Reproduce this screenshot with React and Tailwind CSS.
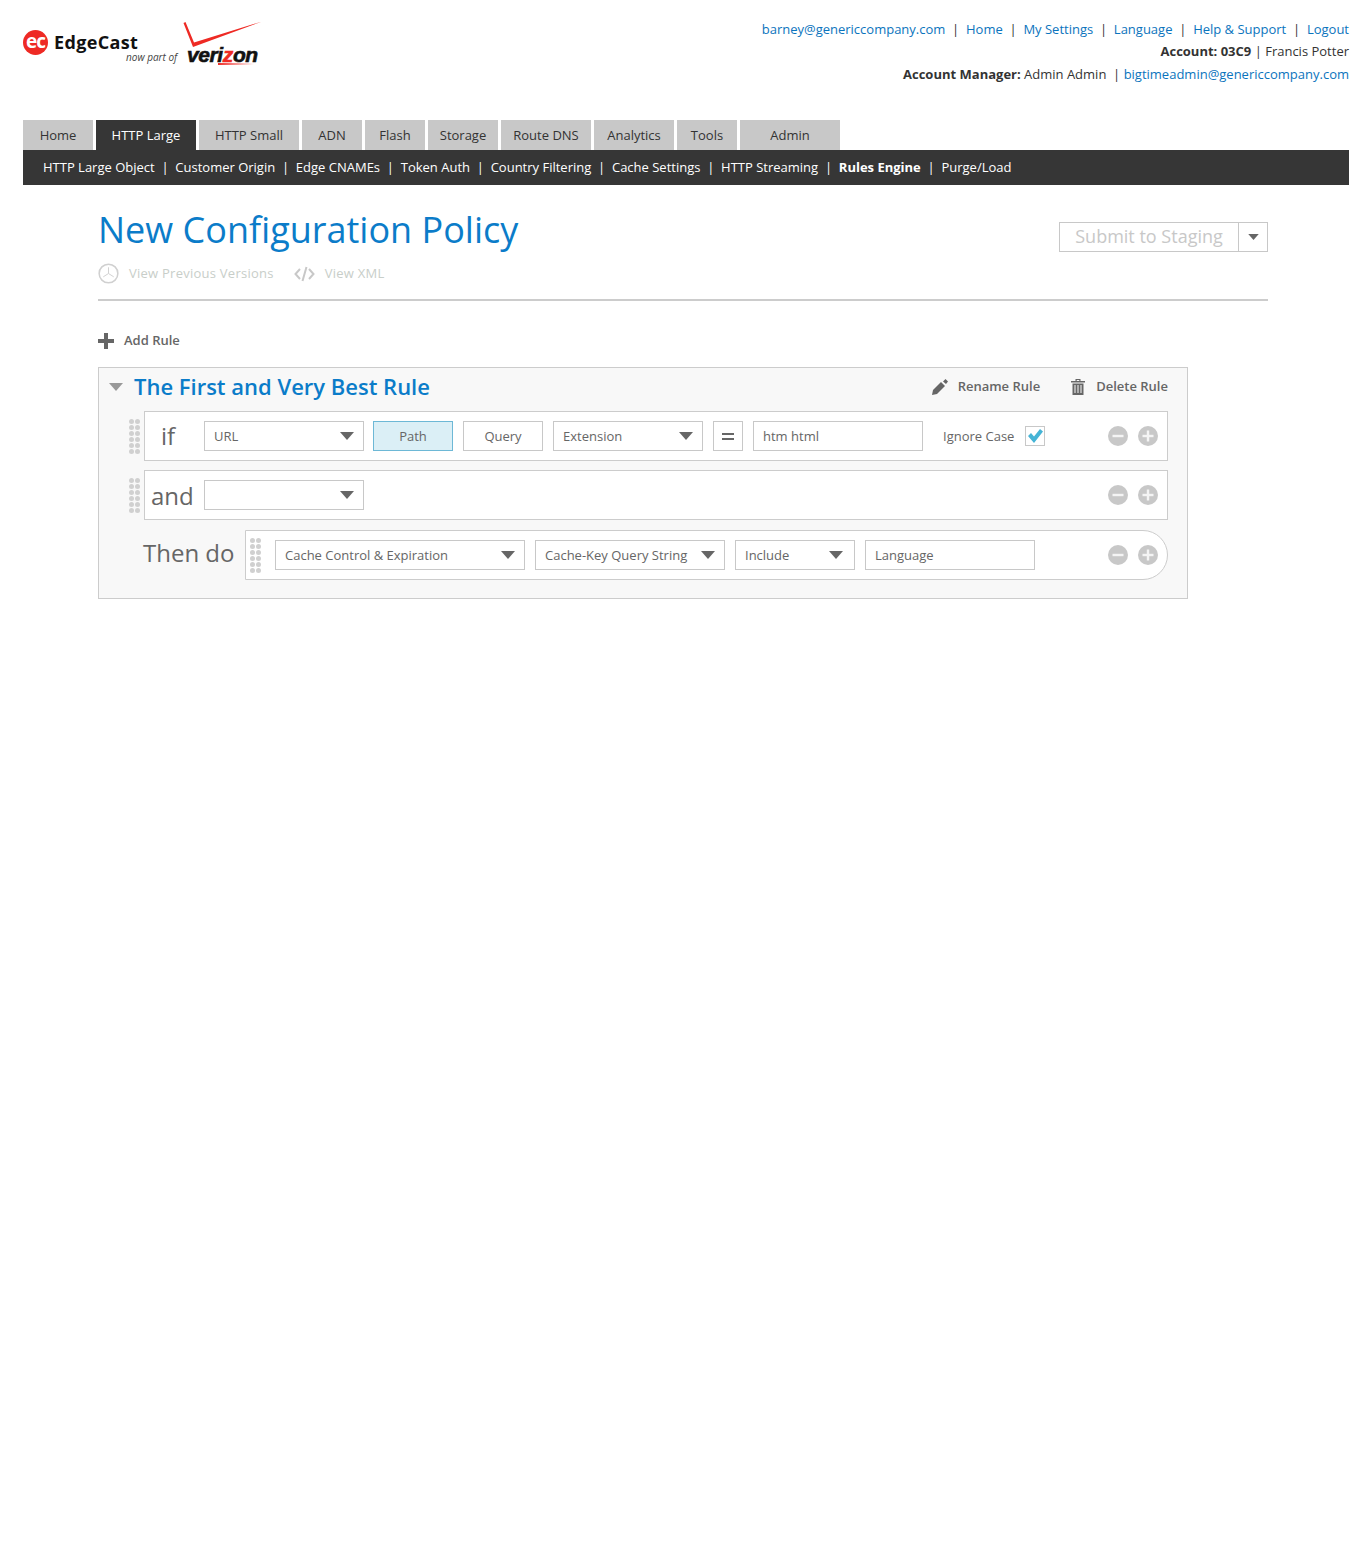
import React from 'react';

const TABS = [
  { label: 'Home', w: 'w-[70px]' },
  { label: 'HTTP Large', w: 'w-[100px]', active: true },
  { label: 'HTTP Small', w: 'w-[100px]' },
  { label: 'ADN', w: 'w-[60px]' },
  { label: 'Flash', w: 'w-[60px]' },
  { label: 'Storage', w: 'w-[70px]' },
  { label: 'Route DNS', w: 'w-[90px]' },
  { label: 'Analytics', w: 'w-[80px]' },
  { label: 'Tools', w: 'w-[60px]' },
  { label: 'Admin', w: 'w-[100px]' },
];

const SUBNAV = [
  'HTTP Large Object',
  'Customer Origin',
  'Edge CNAMEs',
  'Token Auth',
  'Country Filtering',
  'Cache Settings',
  'HTTP Streaming',
  'Rules Engine',
  'Purge/Load',
];

const Caret = ({ className = 'w-[14px] h-[8px]', fill = '#666666' }) => (
  <svg viewBox="0 0 14 8" className={className}>
    <path d="M0 0h14L7 8z" fill={fill} />
  </svg>
);

const Grip = () => (
  <div className="grid grid-cols-2 gap-x-px gap-y-px w-[11px] shrink-0">
    {Array.from({ length: 12 }).map((_, i) => (
      <span key={i} className="w-[5px] h-[5px] rounded-full bg-[#d0d0d0]" />
    ))}
  </div>
);

const Select = ({ w, label, pr = 'pr-[9px]' }) => (
  <div className={`${w} ${pr} h-[30px] shrink-0 flex items-center justify-between bg-white border border-[#c8c8c8] pl-[9px] text-[13px] text-[#666]`}>
    <span className="pt-px">{label}</span>
    <Caret />
  </div>
);

const Toggle = ({ label, active }) => (
  <div
    className={`w-[80px] h-[30px] pt-px shrink-0 flex items-center justify-center border text-[13px] text-[#666] ${
      active ? 'bg-[#dbeff6] border-[#6db8d6]' : 'bg-white border-[#c8c8c8]'
    }`}
  >
    {label}
  </div>
);

const TextBox = ({ w, label }) => (
  <div className={`${w} h-[30px] pt-px shrink-0 flex items-center bg-white border border-[#c8c8c8] pl-[9px] text-[13px] text-[#666]`}>
    {label}
  </div>
);

const RoundButton = ({ plus }) => (
  <svg viewBox="0 0 20 20" className="w-5 h-5 shrink-0">
    <circle cx="10" cy="10" r="10" fill="#c8c8c8" />
    <rect x="4.5" y="8.8" width="11" height="2.4" fill="#f4f4f4" />
    {plus && <rect x="8.8" y="4.5" width="2.4" height="11" fill="#f4f4f4" />}
  </svg>
);

const RowButtons = () => (
  <div className="ml-auto flex items-center gap-[10px] pr-[9px]">
    <RoundButton />
    <RoundButton plus />
  </div>
);

const Logo = () => (
  <div className="relative w-[240px] h-[50px]">
    <div className="absolute left-0 top-[8px] w-[25px] h-[25px] rounded-full bg-[#ee2a24] flex items-center justify-center text-white text-[19px] font-bold leading-none tracking-[-1px] pb-[3px]">
      ec
    </div>
    <div className="absolute left-[31px] top-[8px] text-[18px] leading-[25px] font-bold tracking-[0.35px] text-[#111]">EdgeCast</div>
    <div className="absolute left-[103px] top-[27px] text-[10px] leading-[16px] italic text-[#444]">now part of</div>
    <svg viewBox="0 0 80 28" className="absolute left-[160px] top-0 w-[80px] h-[28px]">
      <path d="M0.5 1 L2.5 0 L11 20.5 L79 -0.5 L10 25 Z" fill="#ee2a24" />
    </svg>
    <div className="absolute left-[164px] top-[20px] text-[21px] leading-[26px] font-bold italic tracking-[-0.4px] text-[#111] [-webkit-text-stroke:0.6px_#111] font-['Liberation_Sans',sans-serif]">
      veri<span className="text-[#ee2a24] [-webkit-text-stroke:0.6px_#ee2a24]">z</span>on
    </div>
    <div className="absolute left-[195px] top-[41px] w-[36px] h-[2px] bg-linear-to-r from-[#ee2a24] to-transparent" />
  </div>
);

const App = () => {
  return (
    <div className="w-[1366px] h-[1560px] bg-white font-['Open_Sans',sans-serif] text-[13px]">
      {/* Header */}
      <header className="h-[120px] pl-[23px] pr-[17px] flex justify-between">
        <div className="pt-[22px]">
          <Logo />
        </div>
        <div className="pt-[18px] text-right text-[#333] leading-[22px]">
          <div className="text-[#0b74bd]">
            barney@genericcompany.com<span className="text-[#333] mx-[6.75px]">|</span>Home
            <span className="text-[#333] mx-[6.75px]">|</span>My Settings
            <span className="text-[#333] mx-[6.75px]">|</span>Language
            <span className="text-[#333] mx-[6.75px]">|</span>Help &amp; Support
            <span className="text-[#333] mx-[6.75px]">|</span>Logout
          </div>
          <div>
            <b className="font-bold">Account: 03C9</b> | Francis Potter
          </div>
          <div className="mt-px">
            <b className="font-bold">Account Manager:</b> Admin Admin &nbsp;| <span className="text-[#0b74bd]">bigtimeadmin@genericcompany.com</span>
          </div>
        </div>
      </header>

      {/* Tabs */}
      <nav className="ml-[23px] w-[1326px]">
        <div className="flex gap-[3px] h-[30px]">
          {TABS.map((tab) => (
            <div
              key={tab.label}
              className={`${tab.w} pt-[2px] flex items-center justify-center ${
                tab.active ? 'bg-[#363636] text-white' : 'bg-[#c8c8c8] text-[#333]'
              }`}
            >
              {tab.label}
            </div>
          ))}
        </div>
        <div className="h-[35px] bg-[#363636] text-white flex items-center pl-[20px]">
          {SUBNAV.map((item, idx) => (
            <React.Fragment key={item}>
              {idx > 0 && <span className="mx-[6.75px]">|</span>}
              <span className={item === 'Rules Engine' ? 'font-bold' : ''}>{item}</span>
            </React.Fragment>
          ))}
        </div>
      </nav>

      <main className="ml-[98px] w-[1170px]">
        {/* Title */}
        <div className="h-[116px] border-b-2 border-[#cccccc] relative">
          <div className="flex justify-between">
            <h1 className="mt-[21px] text-[36px] leading-[48px] text-[#0b7cc9]">New Configuration Policy</h1>
            <div className="mt-[37px] h-[30px] flex border border-[#c8c8c8] text-[18px] text-[#c8c8c8]">
              <div className="w-[179px] pb-[2px] flex items-center justify-center border-r border-[#c8c8c8]">Submit to Staging</div>
              <div className="w-[28px] flex items-center justify-center">
                <Caret className="w-[11px] h-[6px]" />
              </div>
            </div>
          </div>
          <div className="mt-[9px] flex items-center text-[#c8cec9] tracking-[0.25px]">
            <svg viewBox="0 0 22 22" className="w-[21px] h-[21px]">
              <circle cx="11" cy="11" r="9.8" fill="none" stroke="#d0d0d0" strokeWidth="1.6" />
              <path d="M11 4.5V11L5.5 14.5M11 11l5.5 3.5" fill="none" stroke="#d0d0d0" strokeWidth="1" />
            </svg>
            <span className="ml-[10px]">View Previous Versions</span>
            <svg viewBox="0 0 21 16" className="ml-[20px] w-[21px] h-[16px]">
              <path d="M6 3L1.5 8L6 13M15 3L19.5 8L15 13M12.5 1L8.5 15" fill="none" stroke="#c8c8c8" strokeWidth="2" />
            </svg>
            <span className="ml-[10px]">View XML</span>
          </div>
        </div>

        {/* Add rule */}
        <div className="mt-[32px] h-[16px] flex items-center font-semibold text-[#666]">
          <svg viewBox="0 0 16 16" className="w-4 h-4">
            <path d="M6 0h4v6h6v4h-6v6H6v-6H0V6h6z" fill="#666666" />
          </svg>
          <span className="ml-[10px]">Add Rule</span>
        </div>

        {/* Rule panel */}
        <section className="mt-[18px] w-[1090px] h-[232px] bg-[#f8f8f8] border border-[#cccccc] pr-[19px]">
          <div className="h-[43px] pb-[6px] flex items-center pl-[9px]">
            <Caret className="w-[16px] h-[8px]" fill="#999999" />
            <h2 className="ml-[10px] mb-[2px] text-[22px] leading-[36px] font-semibold text-[#0b7cc9]">The First and Very Best Rule</h2>
            <div className="ml-auto flex items-center font-semibold text-[#666]">
              <svg viewBox="0 0 16 16" className="w-4 h-4">
                <path d="M0 16l1-5 8-8 4 4-8 8zM11 2.5l2.5-2.5L16 2.5 14 5z" fill="#666666" />
              </svg>
              <span className="ml-[10px]">Rename Rule</span>
              <svg viewBox="0 0 16 18" className="ml-[30px] w-[16px] h-[18px]">
                <path d="M1 3h14v1.4H1zM5.5 3V1h5v2h-1.2V2H6.7v1zM2.5 5.5h11V17h-11z" fill="#666666" />
                <path d="M5 7v8M8 7v8M11 7v8" stroke="#f8f8f8" strokeWidth="1" />
              </svg>
              <span className="ml-[10px]">Delete Rule</span>
            </div>
          </div>

          <div className="flex flex-col text-[#666]">
            {/* if row */}
            <div className="flex items-center">
              <div className="w-[45px] pl-[30px] shrink-0">
                <Grip />
              </div>
              <div className="flex-1 h-[50px] bg-white border border-[#cccccc] flex items-center">
                <div className="w-[59px] pl-[16px] text-[24px] shrink-0">if</div>
                <Select w="w-[160px]" label="URL" />
                <div className="ml-[9px] flex gap-[10px] items-center">
                  <Toggle label="Path" active />
                  <Toggle label="Query" />
                  <Select w="w-[150px]" label="Extension" />
                  <div className="w-[30px] h-[30px] border border-[#c8c8c8] flex items-center justify-center">
                    <div className="w-[12px] h-[7px] border-y-2 border-[#666]" />
                  </div>
                  <TextBox w="w-[170px]" label="htm html" />
                </div>
                <span className="ml-[20px] pt-px text-[13px]">Ignore Case</span>
                <div className="ml-[11px] w-5 h-5 border border-[#c8c8c8] flex items-center justify-center">
                  <svg viewBox="0 0 16 14" className="w-[16px] h-[14px]">
                    <path d="M1 7l3-3 3 3.5L13 0l3 2.5L7 14z" fill="#45b4d6" />
                  </svg>
                </div>
                <RowButtons />
              </div>
            </div>

            {/* and row */}
            <div className="mt-[9px] flex items-center">
              <div className="w-[45px] pl-[30px] shrink-0">
                <Grip />
              </div>
              <div className="flex-1 h-[50px] bg-white border border-[#cccccc] flex items-center">
                <div className="w-[59px] pl-[6px] pt-[2px] text-[24px] shrink-0">and</div>
                <Select w="w-[160px]" label="" />
                <RowButtons />
              </div>
            </div>

            {/* then row */}
            <div className="mt-[10px] flex items-center">
              <div className="w-[146px] pl-[44px] pb-[4px] text-[24px] shrink-0">Then do</div>
              <div className="flex-1 h-[50px] bg-white border border-[#cccccc] rounded-r-[25px] flex items-center pl-[4px]">
                <Grip />
                <div className="ml-[14px] flex items-center gap-[10px]">
                  <Select w="w-[250px]" label="Cache Control & Expiration" />
                  <Select w="w-[190px]" label="Cache-Key Query String" />
                  <Select w="w-[120px]" label="Include" pr="pr-[11px]" />
                  <TextBox w="w-[170px]" label="Language" />
                </div>
                <RowButtons />
              </div>
            </div>
          </div>
        </section>
      </main>
    </div>
  );
};

export default App;
